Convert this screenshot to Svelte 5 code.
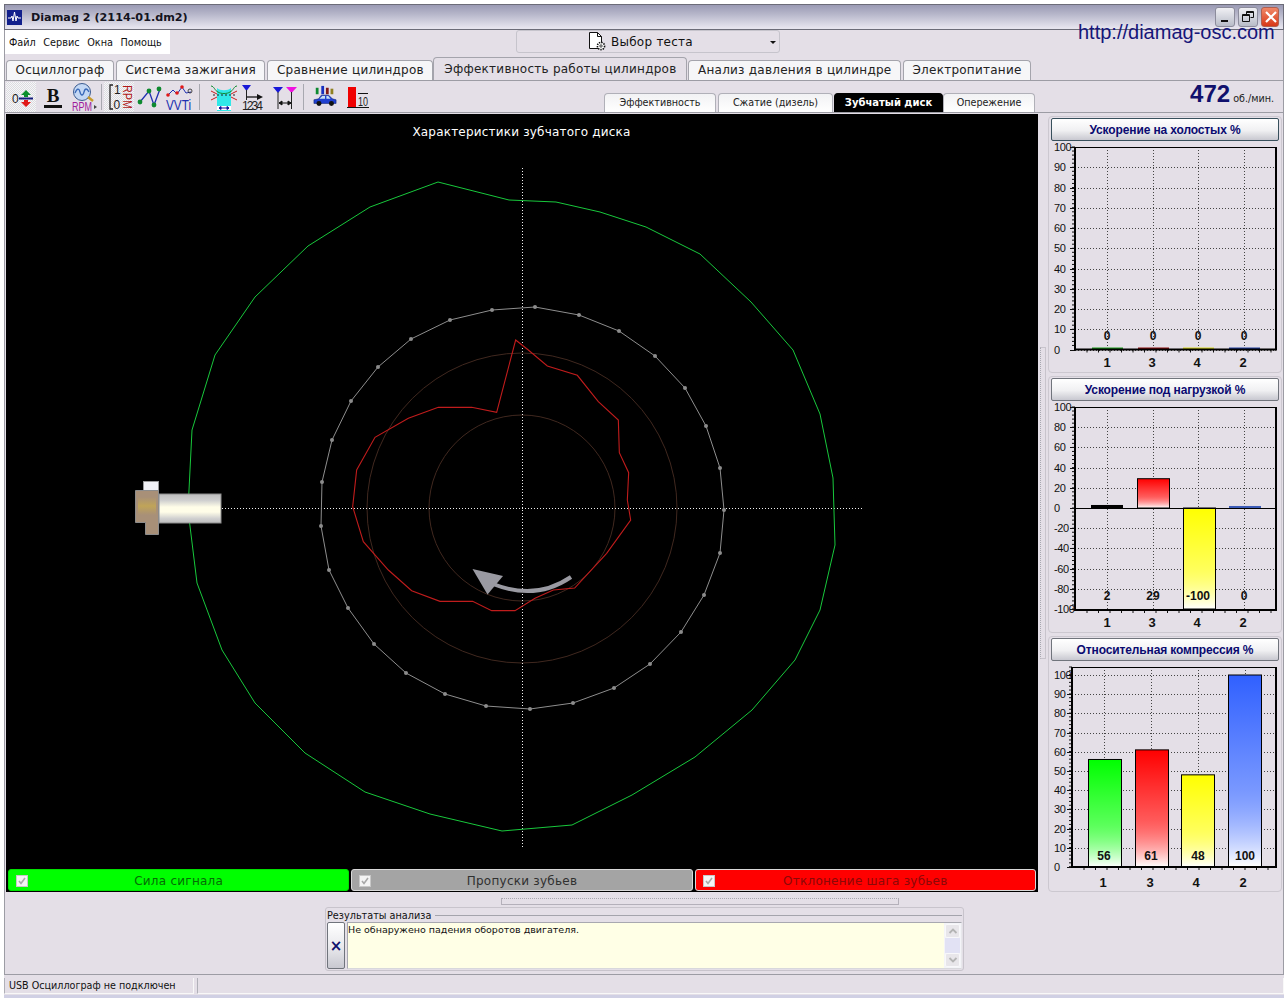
<script>
  const tabs = [
    { label: 'Осциллограф' },
    { label: 'Система зажигания' },
    { label: 'Сравнение цилиндров' },
    { label: 'Эффективность работы цилиндров', active: true },
    { label: 'Анализ давления в цилиндре' },
    { label: 'Электропитание' }
  ];
  const subtabs = [
    { label: 'Эффективность' },
    { label: 'Сжатие (дизель)' },
    { label: 'Зубчатый диск', active: true },
    { label: 'Опережение' }
  ];

  const green = [[370,207],[438,182],[509,200],[556,202],[600,212],[646,227],[700,254],[751,302],[793,350],[820,414],[833,478],[835,545],[820,610],[795,660],[752,710],[695,757],[632,795],[572,825],[502,831],[430,814],[365,792],[305,753],[255,703],[222,650],[197,583],[188,510],[192,430],[215,355],[255,297],[308,246]];
  const gray = [[535,307],[579,315],[619,331],[655,356],[685,388],[706,426],[720,468],[724,510],[720,553],[704,595],[681,632],[650,664],[614,688],[573,703],[530,709],[486,706],[445,694],[406,673],[374,644],[348,608],[329,570],[321,526],[322,482],[332,440],[351,401],[378,367],[411,339],[450,320],[492,310]];
  // traced from a 3x crop whose origin is (340,290)
  const red = [[527,150],[565,180],[622,228],[712,256],[775,335],[835,390],[838,488],[866,548],[862,630],[872,690],[800,790],[704,894],[640,900],[585,925],[525,962],[455,962],[398,934],[300,934],[215,902],[145,840],[70,755],[38,650],[50,540],[105,442],[205,385],[295,352],[395,352],[470,367]]
    .map(([x, y]) => [340 + x / 3, 290 + y / 3]);
  const pts = (a) => a.map((p) => p.join(',')).join(' ');

  const range = (from, to, step) => {
    const out = [];
    for (let v = from; step > 0 ? v <= to : v >= to; v += step) out.push(v);
    return out;
  };

  const charts = [
    {
      title: 'Ускорение на холостых %', id: 'a', top: 116, focus: true,
      l: 1075, t: 147, r: 1276, b: 349.5, y0: 349.5, k: 2.025,
      ticks: range(0, 100, 10), minor: 2,
      gridX: [1107, 1153, 1198, 1244], barW: 31,
      valueY: 340, labelY: 367,
      labelX: [1107, 1152, 1197, 1243],
      bars: [
        { x: 1092, v: 0, text: '0', name: '1', line: '#1c9c1c' },
        { x: 1138, v: 0, text: '0', name: '3', line: '#8c1010' },
        { x: 1183, v: 0, text: '0', name: '4', line: '#d8d820' },
        { x: 1229, v: 0, text: '0', name: '2', line: '#2040a0' }
      ]
    },
    {
      title: 'Ускорение под нагрузкой %', id: 'b', top: 376,
      l: 1075, t: 407, r: 1276, b: 610, y0: 508, k: 1.01,
      ticks: range(100, -100, -20), minor: 4,
      gridX: [1107, 1153, 1198, 1244], barW: 32,
      valueY: 600, labelY: 627,
      labelX: [1107, 1152, 1197, 1243],
      bars: [
        { x: 1091, v: 2, text: '2', name: '1', line: '#000' },
        { x: 1137, v: 29, text: '29', name: '3', fill: 'red' },
        { x: 1183, v: -100, text: '-100', name: '4', fill: 'yellow' },
        { x: 1229, v: 1, text: '0', name: '2', line: '#3c5cb8' }
      ]
    },
    {
      title: 'Относительная компрессия %', id: 'c', top: 636,
      l: 1072, t: 667, r: 1276, b: 867, y0: 867, k: 1.92,
      ticks: range(0, 100, 10), minor: 2,
      gridX: [1104, 1151, 1198, 1245], barW: 33,
      valueY: 860, labelY: 887,
      labelX: [1103, 1150, 1196, 1243],
      bars: [
        { x: 1088, v: 56, text: '56', name: '1', fill: 'green' },
        { x: 1135, v: 61, text: '61', name: '3', fill: 'red' },
        { x: 1181, v: 48, text: '48', name: '4', fill: 'yellow' },
        { x: 1228, v: 100, text: '100', name: '2', fill: 'blue' }
      ]
    }
  ];
  const fills = { green: '#00ff00', red: '#ff0000', yellow: '#ffff00', blue: '#3060ff' };
</script>

<div class="window">
  <a class="url" href="http://diamag-osc.com">http://diamag-osc.com</a>

  <header class="titlebar">
    <svg class="appicon" width="15" height="15" viewBox="0 0 15 15">
      <rect width="15" height="15" fill="#12208c" />
      <path d="M1 8h3l1-2 1 5 1.500-9 1.500 9 1-5 1 2h3" fill="none" stroke="#fff" stroke-width="1" />
    </svg>
    <span class="apptitle">Diamag 2 (2114-01.dm2)</span>
    <div class="winbtns">
      <button class="winbtn"><svg width="18" height="18" viewBox="0 0 18 18"><rect x="5" y="12" width="7" height="2" fill="#111" /></svg></button>
      <button class="winbtn"><svg width="18" height="18" viewBox="0 0 18 18"><path d="M7.500 6.500V3.500h7v6h-3M3.500 6.500h7v7h-7z" fill="none" stroke="#111" /><path d="M3.500 7.500h7M7.500 4.500h7" stroke="#111" /></svg></button>
      <button class="winbtn close"><svg width="18" height="18" viewBox="0 0 18 18"><path d="M4 4l10 10M14 4L4 14" stroke="#fff" stroke-width="2.200" /></svg></button>
    </div>
  </header>

  <div class="menurow">
    <nav class="menu">
      <span>Файл</span><span>Сервис</span><span>Окна</span><span>Помощь</span>
    </nav>
    <div class="select">
      <svg width="21" height="21" viewBox="0 0 21 21">
        <path d="M2.500 1.500h8l4 4v12h-12z" fill="#fff" stroke="#111" />
        <path d="M10.500 1.500v4h4" fill="none" stroke="#111" />
        <circle cx="14" cy="15" r="3.600" fill="#fff" stroke="#111" stroke-width="1.600" stroke-dasharray="1.400 1" />
        <circle cx="14" cy="15" r="1.200" fill="#fff" stroke="#111" stroke-width=".8" />
      </svg>
      <span>Выбор теста</span>
      <i class="caret"></i>
    </div>
  </div>

  <div class="tabs">
    {#each tabs as t}
      <div class="tab" class:active={t.active}>{t.label}</div>
    {/each}
  </div>

  <div class="toolbar">
    <div class="tool pressed first">
      <svg width="30" height="30" viewBox="0 0 30 30">
        <text x="6" y="21" class="ic" fill="#222">0</text>
        <path d="M20 8l-5 5h3v2h4v-2h3z" fill="#0b8f2c" />
        <rect x="13" y="15.500" width="14" height="2" fill="#141c7c" />
        <path d="M20 25l-5-5h3v-2h4v2h3z" fill="#e01818" />
      </svg>
    </div>
    <div class="tool bold">
      <svg width="26" height="30" viewBox="0 0 26 30">
        <text x="13" y="20" text-anchor="middle" class="ib">B</text>
        <rect x="4" y="23" width="18" height="3" fill="#111" />
      </svg>
    </div>
    <div class="tool rpm">
      <svg width="28" height="30" viewBox="0 0 28 30">
        <circle cx="11" cy="10" r="8.500" fill="#c4d8f4" stroke="#3c5c90" />
        <path d="M4 11c2-5 4-5 5-1s3 4 4 0 3-4 5 0" fill="none" stroke="#3868b8" stroke-width="1.300" />
        <path d="M17 15l5 4" stroke="#c89a28" stroke-width="2.400" />
        <text x="1" y="28.500" class="tall" fill="#a01c9c" textLength="20" lengthAdjust="spacingAndGlyphs">RPM</text>
        <path d="M23 23l3 2-3 2z" fill="#444" />
      </svg>
    </div>
    <i class="sep"></i>
    <div class="tool pressed two">
      <svg width="30" height="30" viewBox="0 0 30 30">
        <path d="M9 3H6v24h3" fill="none" stroke="#222" stroke-width="1.300" />
        <text x="10" y="12" class="tall" fill="#222">1</text>
        <text x="9.500" y="27" class="tall" fill="#222">0</text>
        <text transform="translate(19 3) rotate(90)" class="tall" fill="#b01818" textLength="24" lengthAdjust="spacingAndGlyphs" y="0">RPM</text>
      </svg>
    </div>
    <div class="tool graph">
      <svg width="26" height="30" viewBox="0 0 26 30">
        <path d="M4 20l9-11 5 14 6-16" fill="none" stroke="#2030b0" stroke-width="1.300" />
        <circle cx="4" cy="20" r="2.400" fill="#0e8a30" /><circle cx="13" cy="9" r="2.400" fill="#0e8a30" />
        <circle cx="18" cy="23" r="2.400" fill="#0e8a30" /><circle cx="23" cy="7" r="2.400" fill="#0e8a30" />
      </svg>
    </div>
    <div class="tool vvti">
      <svg width="28" height="30" viewBox="0 0 28 30">
        <path d="M3 13l5-5 4 4 5-7 4 6 5-1" fill="none" stroke="#2030b0" />
        <circle cx="3" cy="13" r="1.800" fill="#e01818" /><circle cx="12" cy="11" r="1.800" fill="#e01818" />
        <circle cx="17" cy="5" r="1.800" fill="#e01818" /><circle cx="25" cy="9" r="2" fill="none" stroke="#222" stroke-width=".8" />
        <text x="1" y="28" class="tall big" fill="#2030b0" textLength="25" lengthAdjust="spacingAndGlyphs">VVTi</text>
      </svg>
    </div>
    <i class="sep sep2"></i>
    <div class="tool width28">
      <svg width="28" height="30" viewBox="0 0 28 30">
        <path d="M7 6c3 3 11 3 14 0v23H7z" fill="#30e8e8" />
        <rect x="7" y="24" width="14" height="4" fill="#fff" />
        <path d="M9 26h10M9 26l2-1.500v3zM19 26l-2-1.500v3z" stroke="#10109c" fill="#10109c" />
        <path d="M1 4c3 0 4 5 7 6 3 2 9 2 12 0 3-1 4-6 7-6" fill="none" stroke="#0e8a30" />
        <path d="M1 9l6 3M27 9l-6 3M1 18l6-3M27 18l-6-3" stroke="#c82020" />
        <path d="M3 13h22" stroke="#222" stroke-dasharray="2 2" />
      </svg>
    </div>
    <div class="tool width24">
      <svg width="24" height="30" viewBox="0 0 24 30">
        <path d="M1 3h9l-4.500 6z" fill="#1818d8" />
        <path d="M5.500 8v10" stroke="#222" />
        <path d="M6 15h14" stroke="#111" stroke-width="1.300" />
        <path d="M16 12l6 3-6 3z" fill="#111" />
        <text x="1" y="28" class="tall" fill="#222" textLength="21" lengthAdjust="spacing">1234</text>
      </svg>
    </div>
    <div class="tool width26">
      <svg width="26" height="30" viewBox="0 0 26 30">
        <path d="M2 5h10l-5 6z" fill="#1818d8" />
        <path d="M15 5h11l-5.500 6z" fill="#f010e0" />
        <path d="M7 10v17M20.500 10v17" stroke="#222" />
        <path d="M8 21h12M8 21l3-2v4zM20 21l-3-2v4z" stroke="#111" fill="#111" />
      </svg>
    </div>
    <i class="sep sep3"></i>
    <div class="tool car">
      <svg width="24" height="30" viewBox="0 0 26 30">
        <rect x="3" y="5" width="3" height="7" fill="#0e8a30" /><rect x="9" y="3" width="3" height="9" fill="#1830c0" />
        <rect x="14" y="5" width="3" height="7" fill="#801818" /><rect x="19" y="6" width="3" height="6" fill="#908020" />
        <path d="M1 22v-4l5-1 3-4h8l4 4 4 1v4z" fill="#2040d0" stroke="#102070" stroke-width=".6" />
        <path d="M10 14h3v3H7zM14.500 14h2l2.500 3h-4.500z" fill="#c8e0f4" />
        <circle cx="6.500" cy="22" r="2.700" fill="#111" /><circle cx="20" cy="22" r="2.700" fill="#111" />
      </svg>
    </div>
    <div class="tool redbar">
      <svg width="22" height="30" viewBox="0 0 22 30">
        <rect x="1" y="5" width="8" height="20" fill="#f00000" />
        <rect y="25" width="22" height="1" fill="#111" />
        <rect x="11" y="11" width="10" height="1" fill="#111" />
        <text x="11" y="23.500" class="tall" fill="#222" textLength="10" lengthAdjust="spacingAndGlyphs">10</text>
      </svg>
    </div>

    <div class="subtabs">
      {#each subtabs as t}
        <div class="subtab" class:active={t.active}>{t.label}</div>
      {/each}
    </div>
    <div class="rpmvalue"><b>472</b><span>об./мин.</span></div>
  </div>

  <main class="main">
    <section class="scope">
      <svg class="diagram" width="1032" height="755" viewBox="6 114 1032 755">
        <defs>
          <linearGradient id="cyl" x1="0" y1="0" x2="0" y2="1">
            <stop offset="0" stop-color="#bdbdbd" /><stop offset=".22" stop-color="#cfcfcf" />
            <stop offset=".45" stop-color="#fffde8" /><stop offset=".62" stop-color="#fffde8" />
            <stop offset=".85" stop-color="#cfcfcf" /><stop offset="1" stop-color="#bdbdbd" />
          </linearGradient>
          <linearGradient id="nut" x1="0" y1="0" x2="0" y2="1">
            <stop offset="0" stop-color="#a89078" /><stop offset=".5" stop-color="#c0a458" />
            <stop offset="1" stop-color="#a89078" />
          </linearGradient>
        </defs>
        <text x="521.500" y="135.500" text-anchor="middle" class="charttitle">Характеристики зубчатого диска</text>

        <circle cx="522" cy="508" r="93" class="ring" />
        <circle cx="522" cy="508" r="155" class="ring" />

        <path d="M522.500 168V848M222 508.500H862" class="cross" />

        <polygon points={pts(green)} fill="none" stroke="#18c83c" />
        <polygon points={pts(gray)} fill="none" stroke="#8e8e8e" />
        {#each gray as [x, y]}
          <circle cx={x} cy={y} r="2" fill="#8c8c8c" />
        {/each}
        <polygon points={pts(red)} fill="none" stroke="#c01c1c" stroke-width="1.100" />

        <path d="M493 584Q536 601 571 577" fill="none" stroke="#9a9aa2" stroke-width="4" />
        <polygon points="472.500,569 503,576 487.500,594.500" fill="#9a9aa2" />

        <rect x="143.500" y="481.500" width="15" height="9" fill="#f2f2f6" stroke="#999" />
        <rect x="159" y="494" width="62" height="29" fill="url(#cyl)" stroke="#8c8c8c" />
        <path d="M135.500 490.500h23v44h-13v-12h-10z" fill="#a89078" stroke="#8c8c8c" />
        <rect x="138" y="497" width="18" height="18" fill="url(#nut)" />
      </svg>

      <div class="legend">
        <div class="leg lgreen"><i class="check"><svg width="10" height="10" viewBox="0 0 10 10"><path d="M2 5l2 2.500L8 2" fill="none" stroke="#a8a8a8" stroke-width="1.600" /></svg></i><span>Сила сигнала</span></div>
        <div class="leg lgray"><i class="check"><svg width="10" height="10" viewBox="0 0 10 10"><path d="M2 5l2 2.500L8 2" fill="none" stroke="#a8a8a8" stroke-width="1.600" /></svg></i><span>Пропуски зубьев</span></div>
        <div class="leg lred"><i class="check"><svg width="10" height="10" viewBox="0 0 10 10"><path d="M2 5l2 2.500L8 2" fill="none" stroke="#a8a8a8" stroke-width="1.600" /></svg></i><span>Отклонение шага зубьев</span></div>
      </div>
    </section>

    <div class="vsplit"><i></i></div>

    <aside class="side">
      {#each charts as c}
        <div class="panel">
          <div class="panelhead" class:focus={c.focus}>{c.title}</div>
          <svg class="chart" width="234" height="232" viewBox="1048 {c.top + 27} 234 232">
            <defs>
              {#each Object.entries(fills) as [name, col]}
                <linearGradient id="{c.id}-{name}" x1="0" y1="0" x2="0" y2="1">
                  <stop offset="0" stop-color={col} />
                  <stop offset=".6" stop-color={col} stop-opacity=".65" />
                  <stop offset="1" stop-color="#fff" />
                </linearGradient>
              {/each}
            </defs>

            {#each c.ticks as v}
              <path d="M{c.l} {Math.round(c.y0 - v * c.k) + 0.5}H{c.r}" class="grid" />
              <path d="M{c.l - 5} {Math.round(c.y0 - v * c.k) + 0.5}H{c.l}" stroke="#111" />
            {/each}
            {#each range(c.t, c.b, c.k * c.minor) as y}
              <path d="M{c.l - 3} {y}H{c.l}" stroke="#111" />
            {/each}
            {#each c.gridX as x}
              <path d="M{x + 0.5} {c.t}V{c.b}" class="grid" />
            {/each}
            {#each range(c.l + 12, c.r - 4, 11.500) as x}
              <path d="M{x} {c.b}v3" stroke="#111" />
            {/each}

            {#each c.bars as b}
              {#if b.fill}
                <rect
                  x={b.x + 0.5}
                  y={b.v > 0 ? c.y0 - b.v * c.k : c.y0}
                  width={c.barW}
                  height={Math.abs(b.v) * c.k}
                  fill="#fff"
                />
                <rect
                  x={b.x + 0.5}
                  y={b.v > 0 ? c.y0 - b.v * c.k : c.y0}
                  width={c.barW}
                  height={Math.abs(b.v) * c.k}
                  fill="url(#{c.id}-{b.fill})"
                  stroke="#000"
                />
              {:else}
                <rect x={b.x} y={c.y0 - Math.max(b.v * c.k, 1) - 1} width={c.barW} height={Math.max(b.v * c.k, 1) + 1} fill={b.line} />
              {/if}
            {/each}

            {#if c.ticks.includes(-100)}
              <path d="M{c.l} {c.y0 + 0.5}H{c.r}" stroke="#000" stroke-width="1" />
            {/if}
            <path d="M{c.l} {c.t + 0.5}H{c.r}" stroke="#000" />
            <path d="M{c.l} {c.t}V{c.b + 1}" stroke="#000" stroke-width="2" />
            <path d="M{c.l - 1} {c.b}H{c.r}" stroke="#000" stroke-width="2" />
            <path d="M{c.r} {c.t}V{c.b + 1}" stroke="#000" stroke-width="2" />

            {#each c.ticks as v}
              <text x="1054" y={c.y0 - v * c.k + 4} class="ylab">{v}</text>
            {/each}
            {#each c.bars as b, i}
              <text x={c.gridX[i]} y={c.valueY} text-anchor="middle" class="val">{b.text}</text>
              <text x={c.labelX[i]} y={c.labelY} text-anchor="middle" class="xlab">{b.name}</text>
            {/each}
          </svg>
        </div>
      {/each}
    </aside>
  </main>

  <div class="hsplit"><i></i></div>

  <section class="analysis">
    <div class="agroup">
      <div class="ahead"><span>Результаты анализа</span><i></i></div>
      <div class="abody">
        <button class="xbtn">×</button>
        <div class="memo">
          <p>Не обнаружено падения оборотов двигателя.</p>
          <div class="scroll">
            <span class="sb"><svg width="10" height="8" viewBox="0 0 10 8"><path d="M1.500 6l3.500-3.500L8.500 6" fill="none" stroke="#b4b4b4" stroke-width="1.800" /></svg></span>
            <span class="track"></span>
            <span class="sb"><svg width="10" height="8" viewBox="0 0 10 8"><path d="M1.500 2l3.500 3.500L8.500 2" fill="none" stroke="#b4b4b4" stroke-width="1.800" /></svg></span>
          </div>
        </div>
      </div>
    </div>
  </section>

  <footer class="status">
    <div class="cell first">USB Осциллограф не подключен</div>
    <div class="cell rest"></div>
  </footer>
</div>

<style>
  :global(body) {
    margin: 0;
    background: #fff;
  }
  * {
    box-sizing: border-box;
  }
  .window {
    position: relative;
    width: 1288px;
    height: 998px;
    padding: 4px 4px 0 4px;
    display: flex;
    flex-direction: column;
    overflow: hidden;
    font-family: "DejaVu Sans", sans-serif;
    color: #111;
  }
  .window > * {
    background: #e4dfe7;
    flex: none;
  }
  .url {
    position: absolute;
    left: 1078px;
    top: 21px;
    z-index: 3;
    background: none !important;
    color: #16167a;
    font: 20px "Liberation Sans", sans-serif;
    text-decoration: none;
  }

  .titlebar {
    height: 26px;
    display: flex;
    align-items: center;
    padding: 0 4px 0 2px;
    background: linear-gradient(#9a9ab4, #b4b4c8 35%, #e6e4ee 95%) !important;
    border: 1px solid #6c6c78;
  }
  .appicon {
    flex: none;
  }
  .apptitle {
    margin: 1px 0 0 9px;
    font: bold 11.200px "DejaVu Sans", sans-serif;
    color: #141420;
  }
  .winbtns {
    margin-left: auto;
    display: flex;
    gap: 3px;
    margin-top: -1px;
  }
  .winbtn {
    width: 20px;
    height: 20px;
    padding: 0;
    border: 1px solid #8c8c9c;
    border-radius: 3px;
    background: linear-gradient(#f0f0f4, #b8bcc8);
  }
  .winbtn.close {
    width: 18px;
    background: linear-gradient(#f08868, #d83818);
    border-color: #b06050;
  }

  .menurow {
    height: 27px;
    display: flex;
    align-items: flex-start;
    border-left: 1px solid #9c9ca4;
    border-right: 1px solid #9c9ca4;
  }
  .menu {
    width: 165px;
    height: 24px;
    background: #fff;
    display: flex;
    align-items: center;
    gap: 7.600px;
    padding: 0 0 0 4px;
    font: 9.700px "DejaVu Sans", sans-serif;
  }
  .select {
    margin: 0 0 0 346px;
    width: 264px;
    height: 23px;
    border: 1px solid #c6c4cc;
    border-radius: 3px;
    display: flex;
    align-items: center;
    position: relative;
    padding-left: 70px;
    gap: 3px;
    font-size: 12px;
    letter-spacing: 0.25px;
  }
  .caret {
    position: absolute;
    right: 3px;
    top: 10px;
    border: 3px solid transparent;
    border-top-color: #111;
    border-bottom: 0;
  }

  .tabs {
    height: 23px;
    display: flex;
    align-items: flex-end;
    gap: 2px;
    padding-left: 1px;
    border-left: 1px solid #9c9ca4;
    border-right: 1px solid #9c9ca4;
  }
  .tab {
    height: 20px;
    padding: 0 8.500px 2px;
    display: flex;
    align-items: center;
    background: #f6f6f8;
    border: 1px solid #a4a4ac;
    border-bottom: 0;
    border-radius: 4px 4px 0 0;
    font-size: 12px;
    letter-spacing: 0.25px;
    color: #222;
  }
  .tab.active {
    height: 23px;
    background: #e4dfe7;
    padding: 0 10px;
    margin: 0 -1px 0 -2px;
    position: relative;
    z-index: 1;
  }

  .toolbar {
    height: 32px;
    display: flex;
    align-items: center;
    border: 1px solid #9c9ca4;
    border-width: 1px 1px 0 1px;
    padding-left: 1px;
    position: relative;
  }
  .tool {
    flex: none;
    height: 30px;
    display: flex;
    align-items: center;
    justify-content: center;
  }
  .tool svg {
    overflow: visible;
  }
  .pressed {
    background: repeating-conic-gradient(#f6f6f8 0 25%, #dcdce0 0 50%) 0 0 / 2px 2px;
  }
  .first { width: 30px; }
  .bold { width: 26px; margin-left: 4px; }
  .rpm { width: 28px; margin-left: 5px; }
  .two { width: 30px; margin-left: 0; }
  .graph { width: 26px; margin-left: 2px; }
  .vvti { width: 28px; margin-left: 3px; }
  .width28 { width: 28px; margin-left: 7px; }
  .width24 { width: 24px; margin-left: 3px; }
  .width26 { width: 26px; margin-left: 6px; }
  .car { width: 26px; margin-left: 7px; }
  .redbar { width: 22px; margin-left: 9px; }
  .sep {
    flex: none;
    width: 1px;
    height: 26px;
    margin-left: 2px;
    background: #a8a8b0;
    margin-right: 2px;
  }
  .sep2 { margin-left: 6px; margin-right: 3px; }
  .sep3 { margin-left: 6px; margin-right: 1px; }
  .ic { font: 12px "Liberation Sans", sans-serif; }
  .ib { font: bold 19px "Liberation Serif", serif; fill: #111; }
  .tall { font: 12px "Liberation Sans", sans-serif; }
  .big { font-size: 15px; }

  .subtabs {
    position: absolute;
    left: 599px;
    bottom: 0;
    display: flex;
    gap: 2px;
  }
  .subtab {
    width: 112px;
    height: 19px;
    padding-bottom: 2px;
    display: flex;
    align-items: center;
    justify-content: center;
    background: linear-gradient(#f2f2f4, #fff);
    border: 1px solid #b0b0b8;
    border-bottom: 0;
    border-radius: 4px 4px 0 0;
    font: 9.600px "DejaVu Sans", sans-serif;
    color: #222;
  }
  .subtab:nth-child(2) { width: 115px; }
  .subtab:nth-child(3) { width: 109px; background: #000; color: #fff; font-weight: bold; font-size: 10px; border-color: #000; margin-left: -1px; }
  .subtab:nth-child(4) { width: 92px; margin-left: -2px; }
  .rpmvalue {
    position: absolute;
    right: 9px;
    top: -1px;
    display: flex;
    align-items: baseline;
    gap: 3px;
    color: #10106c;
  }
  .rpmvalue b {
    font: bold 24px "Liberation Sans", sans-serif;
  }
  .rpmvalue span {
    font: 9.600px "DejaVu Sans", sans-serif;
    color: #222;
  }

  .main {
    height: 780px;
    display: flex;
    padding: 1px 1px 0 1px;
    border: 1px solid #9c9ca4;
    border-width: 1px 1px 0 1px;
  }
  .scope {
    flex: none;
    width: 1032px;
    height: 778px;
    background: #000;
    display: flex;
    flex-direction: column;
  }
  .diagram {
    display: block;
    flex: none;
  }
  .charttitle {
    font: 12px "DejaVu Sans", sans-serif;
    letter-spacing: 0.2px;
    fill: #fff;
  }
  .ring {
    fill: none;
    stroke: #40281f;
  }
  .cross {
    fill: none;
    stroke: #f0f0f0;
    stroke-dasharray: 1 2;
    shape-rendering: crispEdges;
  }
  .legend {
    display: flex;
    gap: 2px;
    padding: 0 2px;
    height: 22px;
  }
  .leg {
    flex: 1;
    position: relative;
    display: flex;
    align-items: center;
    justify-content: center;
    padding-top: 1px;
    border-radius: 3px;
    border: 1px solid #d8d8d8;
    font-size: 12px;
    letter-spacing: 0.25px;
  }
  .lgreen { background: #00ff00; color: #056c05; border-color: #00e000; }
  .lgray { background: #a4a4a4; color: #303030; }
  .lred { background: #ff0000; color: #8a0808; }
  .check {
    position: absolute;
    left: 7px;
    top: 5px;
    width: 12px;
    height: 12px;
    background: #f4f4f4;
    border: 1px solid #c8c8c8;
    display: flex;
    align-items: center;
    justify-content: center;
  }

  .vsplit {
    flex: none;
    width: 10px;
    display: flex;
    align-items: center;
    justify-content: center;
    height: 778px;
  }
  .vsplit i {
    width: 6px;
    height: 312px;
    border: 1px solid #c8c4cc;
    border-left: 1px dotted #a8a8b0;
  }
  .side {
    flex: none;
    width: 234px;
    display: flex;
    flex-direction: column;
    gap: 3px;
    padding-top: 2px;
  }
  .panel {
    height: 257px;
    border: 1px solid #ccc8d0;
    border-radius: 4px;
    padding: 1px 2px 0;
  }
  .panel:last-child {
    height: 256px;
  }
  .panelhead {
    height: 23px;
    display: flex;
    align-items: center;
    justify-content: center;
    border: 1px solid #70747c;
    border-radius: 2px;
    background: linear-gradient(#fff, #f0f0f2 55%, #c8c8d0);
    font: bold 12px "Liberation Sans", sans-serif;
    letter-spacing: -0.13px;
    color: #0a0a70;
  }
  .panelhead.focus {
    border-color: #38505c;
  }
  .chart {
    display: block;
    margin: 2px 0 0 -3px;
    overflow: visible;
  }
  .grid {
    fill: none;
    stroke: #444;
    stroke-dasharray: 1 2;
    shape-rendering: crispEdges;
  }
  .ylab {
    font: 11px "Liberation Sans", sans-serif;
    letter-spacing: -0.4px;
    fill: #111;
  }
  .val {
    font: bold 12px "Liberation Sans", sans-serif;
    fill: #111;
  }
  .xlab {
    font: bold 13px "Liberation Sans", sans-serif;
    fill: #111;
  }

  .hsplit {
    height: 15px;
    padding: 6px 0 0 496px;
    border-left: 1px solid #9c9ca4;
    border-right: 1px solid #9c9ca4;
  }
  .hsplit i {
    display: block;
    width: 398px;
    height: 7px;
    border: 1px solid #b4b0ba;
    border-top: 1px dotted #a8a8b0;
  }
  .analysis {
    height: 68px;
    padding-left: 320px;
    border-left: 1px solid #9c9ca4;
    border-right: 1px solid #9c9ca4;
    border-bottom: 1px solid #9c9ca4;
  }
  .agroup {
    width: 639px;
    height: 64px;
    border: 1px solid #c8c4cc;
    border-radius: 3px;
    padding: 0 1px;
  }
  .ahead {
    height: 14px;
    display: flex;
    align-items: center;
    gap: 4px;
    font-size: 9.700px;
  }
  .ahead i {
    flex: 1;
    height: 1px;
    background: #a4a4ac;
  }
  .abody {
    display: flex;
    height: 47px;
  }
  .xbtn {
    width: 18px;
    padding: 0;
    border: 1px solid #70747c;
    border-radius: 2px;
    background: linear-gradient(#fff, #e8e8ec 55%, #c8c8d0);
    font: bold 15px "DejaVu Sans", sans-serif;
    color: #10106c;
  }
  .memo {
    flex: 1;
    margin-left: 2px;
    display: flex;
    justify-content: space-between;
    background: #ffffe6;
    border: 1px solid #a8a8b0;
    border-right-color: #e8e8ec;
    border-bottom-color: #d8d8dc;
  }
  .memo p {
    margin: 1px 0 0 0;
    font: 9.500px "DejaVu Sans", sans-serif;
  }
  .scroll {
    width: 17px;
    display: flex;
    flex-direction: column;
    background: #f4f4f8;
    padding: 1px 1px;
  }
  .sb {
    height: 14px;
    display: flex;
    align-items: center;
    justify-content: center;
    background: #e8e6ea;
    border: 1px solid #f8f8fa;
    border-radius: 2px;
  }
  .track {
    flex: 1;
    background: #e2e2f4;
  }

  .status {
    height: 23px;
    display: flex;
    padding: 3px 0 0 0;
    font-size: 9.600px;
    gap: 3px;
    border-bottom: 3px solid #d0d0e4;
  }
  .cell {
    height: 16px;
    border-left: 1px solid #b0b0b8;
    border-bottom: 1px solid #f8f8f8;
    border-right: 1px solid #f8f8f8;
    display: flex;
    align-items: center;
    padding-left: 4px;
  }
  .cell.first { width: 190px; }
  .cell.rest { flex: 1; }
</style>
